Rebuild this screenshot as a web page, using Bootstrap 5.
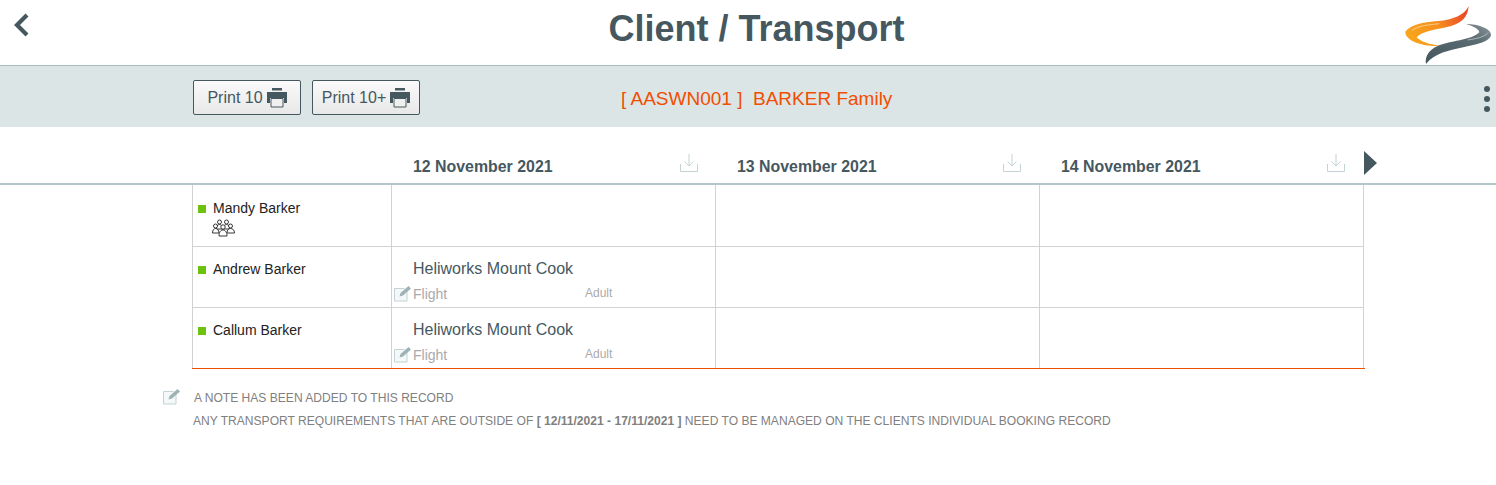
<!DOCTYPE html>
<html lang="en">
<head>
  <meta charset="UTF-8">
  <title>Client / Transport</title>
  <link rel="stylesheet" href="https://cdn.jsdelivr.net/npm/bootstrap@5.3.0/dist/css/bootstrap.min.css">
  <style>
    body { font-family: "Liberation Sans", Arial, sans-serif; background: #fff; color: #46585f; overflow: hidden; }
    .top-bar { height: 66px; border-bottom: 1px solid #a9bcbe; }
    .back-link { left: 12px; top: 12px; line-height: 0; }
    .page-title { font-size: 36px; font-weight: 700; line-height: 1; margin: 11px 0 0 17px; color: #46585f; }
    .logo-mark { right: 0; top: 0; }
    .tool-bar { height: 61px; background: #dce5e6; padding: 2px 0 0 193px; }
    .print-btn { width: 108px; height: 35px; padding: 0; font-size: 16px; color: #46585f; border: 1px solid #46585f; border-radius: 2px; background: linear-gradient(#fafafa, #e8e8e8); gap: 4px; }
    .print-btn + .print-btn { margin-left: 3px; }
    .family-name { color: #f04e00; font-size: 19px; margin: 4px 0 0 201px; }
    .more-dots { right: 6px; top: 20px; gap: 4px; }
    .more-dots span { width: 6px; height: 6px; border-radius: 50%; background: #46585f; }
    .day-row { height: 58px; border-bottom: 2px solid #b3c6c9; padding-left: 391px; }
    .day-head { width: 324px; padding: 0 17px 0 22px; height: 100%; }
    .day-head + .day-head { padding-right: 18px; }
    .day-head strong { font-size: 15.9px; margin-top: 31px; line-height: 18px; }
    .day-head svg { margin-top: 26px; }
    .next-arrow { margin-top: 24px; margin-left: 1px; }
    .grid-wrap { margin-left: 192px; width: 1173px; border-bottom: 1px solid #f04e00; }
    .client-grid { width: 1172px; border-collapse: collapse; table-layout: fixed; margin: 0; }
    .client-grid td { height: 61px; border: 1px solid #d2d2d2; padding: 0; vertical-align: top; }
    .client-grid tr:last-child td { border-bottom: 0; }
    .client-grid tr:first-child td { border-top: 0; }
    .name-cell { padding: 14px 0 0 5px !important; font-size: 14px; line-height: 16px; color: #222; }
    .client-grid tr:first-child .name-cell { padding-top: 15px !important; }
    .status-dot { width: 8px; height: 8px; background: #6fc110; margin-right: 7px; margin-top: 5px; }
    .group-icon { margin: 3px 0 0 14px; display: block; }
    .trip-name { font-size: 16px; line-height: 20px; padding: 12px 0 0 21px; color: #46585f; }
    .trip-meta { padding: 7px 0 0 2px; color: #aaa; font-size: 14px; line-height: 16px; }
    .trip-meta svg { margin-right: 1px; }
    .trip-type { width: 172px; }
    .trip-age { font-size: 12px; margin-top: -1px; }
    .foot-notes { font-size: 12.07px; color: #808080; line-height: 14px; padding-left: 163px; margin-top: 21px; }
    .foot-first { padding-top: 1px; }
    .foot-notes svg { margin-right: 13px; margin-top: -2px; }
    .foot-second { margin: 9px 0 0 30px; }
  </style>
</head>
<body>
  <div class="top-bar position-relative d-flex justify-content-center">
    <a href="#" class="back-link position-absolute">
      <svg width="20" height="26" viewBox="0 0 20 26"><path d="M15 3 5 13l10 10" fill="none" stroke="#46585f" stroke-width="4.2"/></svg>
    </a>
    <h1 class="page-title">Client / Transport</h1>
    <svg class="logo-mark position-absolute" width="100" height="65" viewBox="0 0 300 195">
      <defs>
        <linearGradient id="flame" x1="0" x2="1" y1="0.6" y2="0.3"><stop offset="0" stop-color="#f8a51b"/><stop offset="0.5" stop-color="#f6901e"/><stop offset="1" stop-color="#e9472a"/></linearGradient>
        <linearGradient id="steel" x1="0" x2="1" y1="1" y2="0"><stop offset="0" stop-color="#46585f"/><stop offset="0.7" stop-color="#5b6c73"/><stop offset="1" stop-color="#8a979c"/></linearGradient>
      </defs>
      <path d="M218 18C208 40 185 53 150 60 110 67 55 63 28 95 26 118 70 140 135 138 100 134 72 124 62 112 78 94 115 90 150 82 195 72 215 55 218 18Z" fill="url(#flame)"/>
      <path d="M210 72C245 72 287 86 285 106 280 126 240 134 205 141 160 150 115 160 90 192 86 170 98 150 125 138 160 122 225 122 250 97 250 88 232 78 210 72Z" fill="url(#steel)"/>
      <path d="M48 92C65 76 105 74 130 71" fill="none" stroke="#fff" stroke-width="1.500"/>
      <path d="M215 120C240 116 265 112 276 98" fill="none" stroke="#fff" stroke-width="1.500"/>
    </svg>
  </div>

  <div class="tool-bar position-relative d-flex align-items-center">
    <button class="btn print-btn d-flex align-items-center justify-content-center me-2" type="button">Print 10
      <svg width="20" height="20" viewBox="0 0 20 20"><path d="M5 0h10v2.500H5zM0 4h20v11h-3v-5H3v5H0z" fill="#46585f"/><path d="M4 10.500h12v8.500H4z" fill="#f0f0f0" stroke="#46585f"/></svg>
    </button>
    <button class="btn print-btn d-flex align-items-center justify-content-center" type="button">Print 10+
      <svg width="20" height="20" viewBox="0 0 20 20"><path d="M5 0h10v2.500H5zM0 4h20v11h-3v-5H3v5H0z" fill="#46585f"/><path d="M4 10.500h12v8.500H4z" fill="#f0f0f0" stroke="#46585f"/></svg>
    </button>
    <div class="family-name">[ AASWN001 ]&nbsp; BARKER Family</div>
    <div class="more-dots position-absolute d-flex flex-column"><span></span><span></span><span></span></div>
  </div>

  <div class="day-row d-flex">
    <div class="day-head d-flex justify-content-between"><strong>12 November 2021</strong>
      <svg width="18" height="20" viewBox="0 0 18 20"><path d="M9 1v12M4.500 8.500 9 13l4.500-4.500M.5 11v7.500h17V11" fill="none" stroke="#c3d2d4"/></svg></div>
    <div class="day-head d-flex justify-content-between"><strong>13 November 2021</strong>
      <svg width="18" height="20" viewBox="0 0 18 20"><path d="M9 1v12M4.500 8.500 9 13l4.500-4.500M.5 11v7.500h17V11" fill="none" stroke="#c3d2d4"/></svg></div>
    <div class="day-head d-flex justify-content-between"><strong>14 November 2021</strong>
      <svg width="18" height="20" viewBox="0 0 18 20"><path d="M9 1v12M4.500 8.500 9 13l4.500-4.500M.5 11v7.500h17V11" fill="none" stroke="#c3d2d4"/></svg></div>
    <svg class="next-arrow" width="13" height="24" viewBox="0 0 13 24"><path d="M0 0l13 12L0 24z" fill="#46585f"/></svg>
  </div>

  <div class="grid-wrap">
    <table class="client-grid">
      <colgroup><col style="width:199px"><col style="width:324px"><col style="width:324px"><col style="width:324px"></colgroup>
      <tr>
        <td class="name-cell">
          <div class="d-flex"><span class="status-dot"></span>Mandy Barker</div>
          <svg class="group-icon" width="24" height="18" viewBox="0 0 24 18" fill="#fff" stroke="#222" stroke-width=".9"><circle cx="7.500" cy="3" r="2"/><circle cx="14.500" cy="3" r="2"/><path d="M4 10c0-3 2-4.500 3.500-4.500S11 7 11 10zM11 10c0-3 2-4.500 3.500-4.500S18 7 18 10z"/><circle cx="3.500" cy="7" r="2"/><circle cx="18.500" cy="7" r="2"/><path d="M.5 14c0-3 1.500-4.500 3-4.500S7 11 7 14zM15 14c0-3 1.500-4.500 3.500-4.500S22.500 11 22.500 14z"/><circle cx="11" cy="8" r="2.200"/><path d="M7 17c0-4 2-6 4-6s4 2 4 6z"/></svg>
        </td>
        <td></td><td></td><td></td>
      </tr>
      <tr>
        <td class="name-cell"><div class="d-flex"><span class="status-dot"></span>Andrew Barker</div></td>
        <td>
          <div class="trip-name">Heliworks Mount Cook</div>
          <div class="trip-meta d-flex">
            <svg width="18" height="16" viewBox="0 0 18 16"><path d="M13 5v10H.5V2.500h10" fill="#f4f8f8" stroke="#c3d2d4"/><path d="M5.500 10.500l1-3.500 8-7 2.500 2.500-8 7z" fill="#9fb3b7"/></svg>
            <span class="trip-type">Flight</span><span class="trip-age">Adult</span>
          </div>
        </td>
        <td></td><td></td>
      </tr>
      <tr>
        <td class="name-cell"><div class="d-flex"><span class="status-dot"></span>Callum Barker</div></td>
        <td>
          <div class="trip-name">Heliworks Mount Cook</div>
          <div class="trip-meta d-flex">
            <svg width="18" height="16" viewBox="0 0 18 16"><path d="M13 5v10H.5V2.500h10" fill="#f4f8f8" stroke="#c3d2d4"/><path d="M5.500 10.500l1-3.500 8-7 2.500 2.500-8 7z" fill="#9fb3b7"/></svg>
            <span class="trip-type">Flight</span><span class="trip-age">Adult</span>
          </div>
        </td>
        <td></td><td></td>
      </tr>
    </table>
  </div>

  <div class="foot-notes">
    <div class="foot-first d-flex">
      <svg width="18" height="16" viewBox="0 0 18 16"><path d="M13 5v10H.5V2.500h10" fill="#f4f8f8" stroke="#c3d2d4"/><path d="M5.500 10.500l1-3.500 8-7 2.500 2.500-8 7z" fill="#9fb3b7"/></svg>
      <span>A NOTE HAS BEEN ADDED TO THIS RECORD</span>
    </div>
    <div class="foot-second">ANY TRANSPORT REQUIREMENTS THAT ARE OUTSIDE OF <strong>[ 12/11/2021 - 17/11/2021 ]</strong> NEED TO BE MANAGED ON THE CLIENTS INDIVIDUAL BOOKING RECORD</div>
  </div>
  <script src="https://cdn.jsdelivr.net/npm/bootstrap@5.3.0/dist/js/bootstrap.bundle.min.js"></script>
</body>
</html>
